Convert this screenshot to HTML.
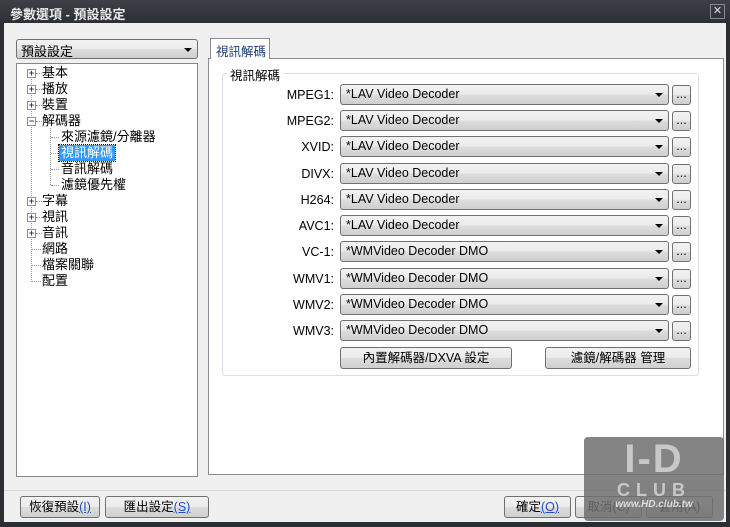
<!DOCTYPE html>
<html><head><meta charset="utf-8"><style>
*{margin:0;padding:0;box-sizing:border-box}
body{width:730px;height:527px;background:#2b2e33;position:relative;overflow:hidden;font-family:"Liberation Sans","Noto Sans CJK TC",sans-serif;font-size:12px;color:#000}
.a{position:absolute;white-space:nowrap}
#title{left:0;top:0;width:730px;height:23px;background:linear-gradient(#3d4047,#2c2f35);color:#e8e8e8;font-size:13px;font-weight:bold;padding:4px 10px}
#close{left:710px;top:4px;width:15px;height:15px;border:1px solid #888;color:#ddd;font-size:11px;text-align:center;line-height:12px}
#client{left:4px;top:23px;width:722px;height:499px;background:#f0f0f0}
.box{background:#fff;border:1px solid #828790}
.cb{border:1px solid #707070;border-radius:3px;background:linear-gradient(#f2f2f2,#ebebeb 50%,#dddddd 51%,#cfcfcf);height:21px;padding:2px 5px;font-size:12.5px}
.cb:after{content:"";position:absolute;right:5px;top:8px;border-left:4px solid transparent;border-right:4px solid transparent;border-top:4px solid #000}
.btn{border:1px solid #707070;border-radius:3px;background:linear-gradient(#f2f2f2,#ebebeb 50%,#dddddd 51%,#cfcfcf);height:22px;text-align:center;line-height:20px;font-size:12.5px}
.lbl{text-align:right;width:80px;left:254px;font-size:12.5px}
.t{font-size:13px;line-height:16px}
.pl{width:9px;height:9px;border:1px solid #8c8c8c;background:#fff;font-size:9px;line-height:7px;text-align:center;color:#2a3b7a;font-weight:bold}
.h{width:6px;border-top:1px dotted #999}
.u{color:#1b53c4;text-decoration:underline}
</style></head><body>
<div id="title" class="a">參數選項 - 預設設定</div>
<div id="close" class="a">✕</div>
<div id="client" class="a"></div>
<div class="a cb" style="left:16px;top:39px;width:182px;height:20px;font-size:13px;padding:1px 4px">預設設定</div>
<div class="a box" style="left:16px;top:63px;width:182px;height:414px"></div>
<div class="a" style="left:31px;top:76px;height:206px;border-left:1px dotted #999"></div>
<div class="a" style="left:50px;top:128px;height:57px;border-left:1px dotted #999"></div>
<div class="a h" style="left:36px;top:73px"></div><div class="a h" style="left:36px;top:89px"></div><div class="a h" style="left:36px;top:105px"></div><div class="a h" style="left:36px;top:121px"></div>
<div class="a h" style="left:51px;top:137px;width:8px"></div><div class="a h" style="left:51px;top:153px;width:7px"></div><div class="a h" style="left:51px;top:169px;width:8px"></div><div class="a h" style="left:51px;top:185px;width:8px"></div>
<div class="a h" style="left:36px;top:201px"></div><div class="a h" style="left:36px;top:217px"></div><div class="a h" style="left:36px;top:233px"></div>
<div class="a h" style="left:32px;top:249px;width:9px"></div><div class="a h" style="left:32px;top:265px;width:9px"></div><div class="a h" style="left:32px;top:281px;width:9px"></div>
<div class="a pl" style="left:27px;top:69px">+</div><div class="a t" style="left:42px;top:65px">基本</div>
<div class="a pl" style="left:27px;top:85px">+</div><div class="a t" style="left:42px;top:81px">播放</div>
<div class="a pl" style="left:27px;top:101px">+</div><div class="a t" style="left:42px;top:97px">裝置</div>
<div class="a pl" style="left:27px;top:117px">−</div><div class="a t" style="left:42px;top:113px">解碼器</div>
<div class="a t" style="left:61px;top:129px">來源濾鏡/分離器</div>
<div class="a t" style="left:59px;top:145px;background:#3399ff;color:#fff;padding:0 2px;outline:1px dotted #000">視訊解碼</div>
<div class="a t" style="left:61px;top:161px">音訊解碼</div>
<div class="a t" style="left:61px;top:177px">濾鏡優先權</div>
<div class="a pl" style="left:27px;top:197px">+</div><div class="a t" style="left:42px;top:193px">字幕</div>
<div class="a pl" style="left:27px;top:213px">+</div><div class="a t" style="left:42px;top:209px">視訊</div>
<div class="a pl" style="left:27px;top:229px">+</div><div class="a t" style="left:42px;top:225px">音訊</div>
<div class="a t" style="left:42px;top:241px">網路</div>
<div class="a t" style="left:42px;top:257px">檔案關聯</div>
<div class="a t" style="left:42px;top:273px">配置</div>

<div class="a" style="left:208px;top:58px;width:516px;height:417px;background:#fff;border:1px solid #898c95"></div>
<div class="a" style="left:210px;top:38px;width:60px;height:21px;background:#fff;border:1px solid #898c95;border-bottom:none;font-size:12.5px;padding:2px 0 0 5px;color:#1e3a78;overflow:hidden">視訊解碼</div>
<div class="a" style="left:222px;top:73px;width:477px;height:303px;border:1px solid #d5dfe5;border-radius:3px"></div>
<div class="a" style="left:227px;top:65px;background:#fff;padding:0 3px;font-size:12.5px">視訊解碼</div>

<div class="a lbl" style="top:88px">MPEG1:</div><div class="a cb" style="left:340px;top:84px;width:329px">*LAV Video Decoder</div><div class="a btn" style="left:672px;top:85px;width:19px;height:20px;line-height:16px">...</div>
<div class="a lbl" style="top:114px">MPEG2:</div><div class="a cb" style="left:340px;top:110px;width:329px">*LAV Video Decoder</div><div class="a btn" style="left:672px;top:111px;width:19px;height:20px;line-height:16px">...</div>
<div class="a lbl" style="top:140px">XVID:</div><div class="a cb" style="left:340px;top:136px;width:329px">*LAV Video Decoder</div><div class="a btn" style="left:672px;top:137px;width:19px;height:20px;line-height:16px">...</div>
<div class="a lbl" style="top:167px">DIVX:</div><div class="a cb" style="left:340px;top:163px;width:329px">*LAV Video Decoder</div><div class="a btn" style="left:672px;top:164px;width:19px;height:20px;line-height:16px">...</div>
<div class="a lbl" style="top:193px">H264:</div><div class="a cb" style="left:340px;top:189px;width:329px">*LAV Video Decoder</div><div class="a btn" style="left:672px;top:190px;width:19px;height:20px;line-height:16px">...</div>
<div class="a lbl" style="top:219px">AVC1:</div><div class="a cb" style="left:340px;top:215px;width:329px">*LAV Video Decoder</div><div class="a btn" style="left:672px;top:216px;width:19px;height:20px;line-height:16px">...</div>
<div class="a lbl" style="top:245px">VC-1:</div><div class="a cb" style="left:340px;top:241px;width:329px">*WMVideo Decoder DMO</div><div class="a btn" style="left:672px;top:242px;width:19px;height:20px;line-height:16px">...</div>
<div class="a lbl" style="top:272px">WMV1:</div><div class="a cb" style="left:340px;top:268px;width:329px">*WMVideo Decoder DMO</div><div class="a btn" style="left:672px;top:269px;width:19px;height:20px;line-height:16px">...</div>
<div class="a lbl" style="top:298px">WMV2:</div><div class="a cb" style="left:340px;top:294px;width:329px">*WMVideo Decoder DMO</div><div class="a btn" style="left:672px;top:295px;width:19px;height:20px;line-height:16px">...</div>
<div class="a lbl" style="top:324px">WMV3:</div><div class="a cb" style="left:340px;top:320px;width:329px">*WMVideo Decoder DMO</div><div class="a btn" style="left:672px;top:321px;width:19px;height:20px;line-height:16px">...</div>
<div class="a btn" style="left:340px;top:347px;width:172px">內置解碼器/DXVA 設定</div>
<div class="a btn" style="left:545px;top:347px;width:146px">濾鏡/解碼器 管理</div>

<div class="a" style="left:4px;top:490px;width:722px;border-top:1px solid #d8d8d8"></div>
<div class="a btn" style="left:20px;top:496px;width:80px">恢復預設<span class="u">(I)</span></div>
<div class="a btn" style="left:105px;top:496px;width:104px">匯出設定<span class="u">(S)</span></div>
<div class="a btn" style="left:504px;top:496px;width:67px">確定<span class="u">(O)</span></div>
<div class="a btn" style="left:575px;top:496px;width:67px">取消(C)</div>
<div class="a btn" style="left:646px;top:496px;width:67px">套用(A)</div>
<div class="a" style="left:584px;top:437px;width:140px;height:84px;background:rgba(110,110,110,0.85);border-radius:4px;color:#ddd;font-weight:bold;text-align:center">
<div style="font-size:40px;line-height:44px;letter-spacing:2px;color:#c8c8c8">I-D</div>
<div style="font-size:18px;line-height:18px;letter-spacing:6px;color:#c8c8c8">CLUB</div>
<div style="font-size:10px;font-style:italic">www.HD.club.tw</div></div>
</body></html>
